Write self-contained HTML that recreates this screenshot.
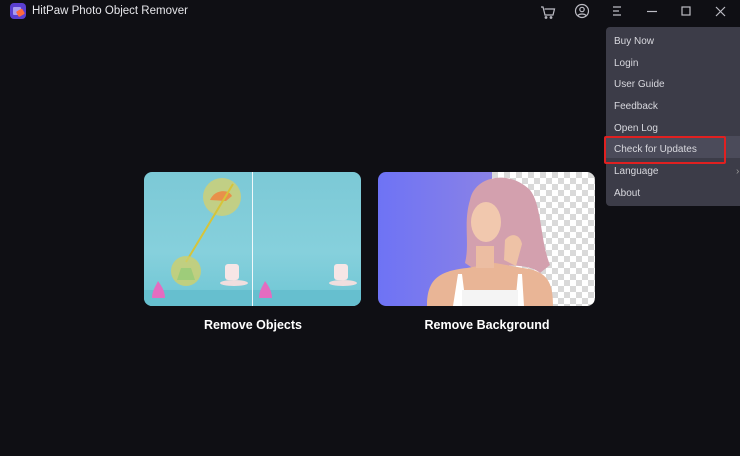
<!DOCTYPE html>
<html><head><meta charset="utf-8"><style>
body{margin:0;width:740px;height:456px;background:#0f0f14;font-family:"Liberation Sans",sans-serif;overflow:hidden;position:relative;color:#fff}
.t{position:absolute;left:32px;top:5px;font-size:11.5px;color:#e6e6ea}
.menu{position:absolute;left:606px;top:27px;width:140px;height:179px;background:#3c3c48;border-radius:4px}
.mi{position:absolute;left:8px;font-size:10px;color:#d8d8de}
.lbl{position:absolute;font-size:12.5px;font-weight:bold;text-align:center;width:218px;top:318px}
</style></head><body>
<svg width="740" height="30" style="position:absolute;left:0;top:0">
<rect x="10" y="3" width="16" height="16" rx="4" fill="#5a3fd0"/>
<rect x="13" y="7" width="8" height="8" rx="1" fill="#a99bf0"/>
<rect x="17" y="10" width="7" height="6" rx="1" transform="rotate(-30 20 13)" fill="#ff6a3c"/>
<g fill="none" stroke="#bdbdc5" stroke-width="1.2">
<path d="M541 7h2l2 8h8l1.5-6h-10"/><circle cx="546" cy="17.5" r=".8"/><circle cx="551" cy="17.5" r=".8"/>
<circle cx="582" cy="11" r="6.5"/><circle cx="582" cy="9.5" r="2.2"/><path d="M578 15.5c1.5-2 6.5-2 8 0"/>
<path d="M613 7h8M613 11h6M613 15h8"/>
<path d="M647 11.5h10"/>
<rect x="682" y="7" width="8" height="8"/>
<path d="M716 7l9 9M725 7l-9 9"/>
</g></svg>
<div class="t">HitPaw Photo Object Remover</div>

<svg width="740" height="310" style="position:absolute;left:0;top:0">
<defs>
<clipPath id="c1"><rect x="144" y="172" width="217" height="134" rx="8"/></clipPath>
<clipPath id="c2"><rect x="378" y="172" width="217" height="134" rx="8"/></clipPath>
<pattern id="ck" width="12" height="12" patternUnits="userSpaceOnUse" x="492" y="172"><rect width="12" height="12" fill="#fff"/><rect width="6" height="6" fill="#d9d9d9"/><rect x="6" y="6" width="6" height="6" fill="#d9d9d9"/></pattern>
<linearGradient id="bl" x1="0" y1="0" x2="0" y2="1"><stop offset="0" stop-color="#7cc9d6"/><stop offset=".6" stop-color="#86d0dc"/><stop offset="1" stop-color="#6ec6d4"/></linearGradient>
<linearGradient id="pu" x1="0" y1="0" x2="1" y2="0"><stop offset="0" stop-color="#6e73f5"/><stop offset="1" stop-color="#8a82e6"/></linearGradient>
</defs>
<g clip-path="url(#c1)">
<rect x="144" y="172" width="217" height="134" fill="url(#bl)"/>
<rect x="144" y="290" width="217" height="16" fill="#66bfcf"/>
<line x1="252.5" y1="172" x2="252.5" y2="306" stroke="#f0f8fa" stroke-width="1"/>
<circle cx="222" cy="197" r="19" fill="#d8d06a" opacity=".75"/>
<path d="M210 200c4-10 18-12 22-4l-6 5z" fill="#e8904a"/>
<line x1="233" y1="184" x2="186" y2="262" stroke="#d6c43a" stroke-width="2"/>
<circle cx="186" cy="271" r="15" fill="#cfd06a" opacity=".8"/>
<path d="M181 268h10l4 12h-18z" fill="#9ecc7a"/>
<path d="M152 298c0-8 5-14 6-17c2 3 7 9 7 17z" fill="#e46cc0"/>
<path d="M259 298c0-8 5-14 6-17c2 3 7 9 7 17z" fill="#e46cc0"/>
<rect x="225" y="264" width="14" height="16" rx="3" fill="#f6e6e6"/><ellipse cx="234" cy="283" rx="14" ry="3" fill="#f0dede"/>
<rect x="334" y="264" width="14" height="16" rx="3" fill="#f6e6e6"/><ellipse cx="343" cy="283" rx="14" ry="3" fill="#f0dede"/>
</g>
<g clip-path="url(#c2)">
<rect x="378" y="172" width="114" height="134" fill="url(#pu)"/>
<rect x="492" y="172" width="103" height="134" fill="url(#ck)"/>
<path d="M470 200c5-25 40-30 60-10c12 15 10 50 20 75l-10 8c-10-10-50-10-60 0l-15-10c5-20-2-40 5-63z" fill="#d3a0ae"/>
<ellipse cx="486" cy="222" rx="15" ry="20" fill="#f1c8ae"/>
<path d="M427 306c0-25 10-35 40-38l28-5l28 5c25 3 30 15 30 38z" fill="#e9b596"/>
<rect x="476" y="246" width="18" height="22" fill="#ecbda2"/>
<path d="M453 306l5-32h4l4 32zM515 306l3-32h4l2 32z" fill="#fff"/>
<path d="M462 290h56v16h-56z" fill="#f4f4f4"/>
<path d="M505 240c6-8 15-6 17 4l-6 22l-12-6z" fill="#eec2a6"/>
</g>
</svg>
<div class="lbl" style="left:144px">Remove Objects</div>
<div class="lbl" style="left:378px">Remove Background</div>

<div class="menu">
<div style="position:absolute;left:0;top:109px;width:140px;height:22px;background:#4b4b5a"></div>
<div class="mi" style="top:9px">Buy Now</div>
<div class="mi" style="top:31px">Login</div>
<div class="mi" style="top:52px">User Guide</div>
<div class="mi" style="top:74px">Feedback</div>
<div class="mi" style="top:96px">Open Log</div>
<div class="mi" style="top:117px">Check for Updates</div>
<div class="mi" style="top:139px">Language</div>
<div class="mi" style="top:161px">About</div>
<div class="mi" style="top:139px;left:130px;color:#999">›</div>
</div>
<div style="position:absolute;left:604px;top:136px;width:118px;height:24px;border:2px solid #e02020;border-radius:2px"></div>
</body></html>
